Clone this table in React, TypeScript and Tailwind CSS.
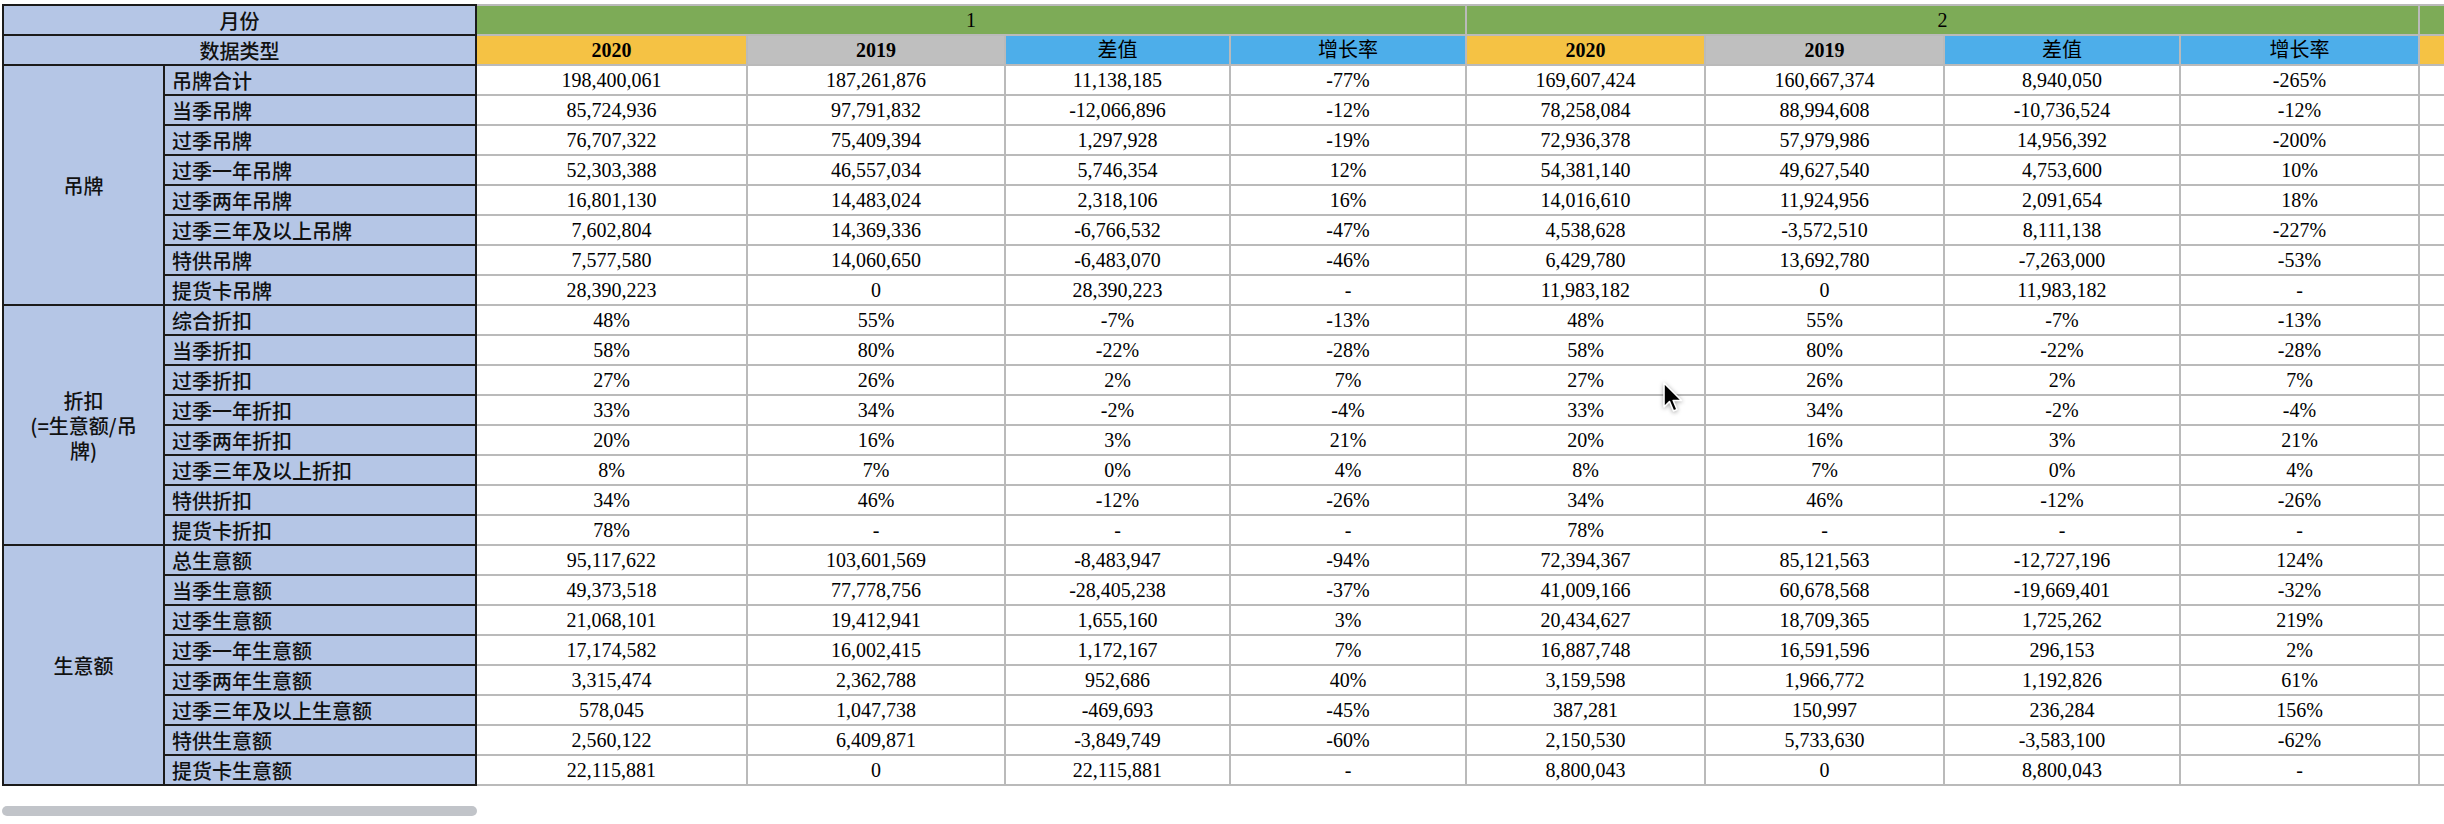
import React from "react"

type Row = { name: string; g1: string[]; g2: string[] }
type Group = { label: React.ReactNode; rows: Row[] }

const groups: Group[] = [
  {
    label: "吊牌",
    rows: [
      { name: "吊牌合计", g1: ["198,400,061", "187,261,876", "11,138,185", "-77%"], g2: ["169,607,424", "160,667,374", "8,940,050", "-265%"] },
      { name: "当季吊牌", g1: ["85,724,936", "97,791,832", "-12,066,896", "-12%"], g2: ["78,258,084", "88,994,608", "-10,736,524", "-12%"] },
      { name: "过季吊牌", g1: ["76,707,322", "75,409,394", "1,297,928", "-19%"], g2: ["72,936,378", "57,979,986", "14,956,392", "-200%"] },
      { name: "过季一年吊牌", g1: ["52,303,388", "46,557,034", "5,746,354", "12%"], g2: ["54,381,140", "49,627,540", "4,753,600", "10%"] },
      { name: "过季两年吊牌", g1: ["16,801,130", "14,483,024", "2,318,106", "16%"], g2: ["14,016,610", "11,924,956", "2,091,654", "18%"] },
      { name: "过季三年及以上吊牌", g1: ["7,602,804", "14,369,336", "-6,766,532", "-47%"], g2: ["4,538,628", "-3,572,510", "8,111,138", "-227%"] },
      { name: "特供吊牌", g1: ["7,577,580", "14,060,650", "-6,483,070", "-46%"], g2: ["6,429,780", "13,692,780", "-7,263,000", "-53%"] },
      { name: "提货卡吊牌", g1: ["28,390,223", "0", "28,390,223", "-"], g2: ["11,983,182", "0", "11,983,182", "-"] },
    ],
  },
  {
    label: (
      <>
        折扣
        <br />
        (=生意额/吊
        <br />
        牌)
      </>
    ),
    rows: [
      { name: "综合折扣", g1: ["48%", "55%", "-7%", "-13%"], g2: ["48%", "55%", "-7%", "-13%"] },
      { name: "当季折扣", g1: ["58%", "80%", "-22%", "-28%"], g2: ["58%", "80%", "-22%", "-28%"] },
      { name: "过季折扣", g1: ["27%", "26%", "2%", "7%"], g2: ["27%", "26%", "2%", "7%"] },
      { name: "过季一年折扣", g1: ["33%", "34%", "-2%", "-4%"], g2: ["33%", "34%", "-2%", "-4%"] },
      { name: "过季两年折扣", g1: ["20%", "16%", "3%", "21%"], g2: ["20%", "16%", "3%", "21%"] },
      { name: "过季三年及以上折扣", g1: ["8%", "7%", "0%", "4%"], g2: ["8%", "7%", "0%", "4%"] },
      { name: "特供折扣", g1: ["34%", "46%", "-12%", "-26%"], g2: ["34%", "46%", "-12%", "-26%"] },
      { name: "提货卡折扣", g1: ["78%", "-", "-", "-"], g2: ["78%", "-", "-", "-"] },
    ],
  },
  {
    label: "生意额",
    rows: [
      { name: "总生意额", g1: ["95,117,622", "103,601,569", "-8,483,947", "-94%"], g2: ["72,394,367", "85,121,563", "-12,727,196", "124%"] },
      { name: "当季生意额", g1: ["49,373,518", "77,778,756", "-28,405,238", "-37%"], g2: ["41,009,166", "60,678,568", "-19,669,401", "-32%"] },
      { name: "过季生意额", g1: ["21,068,101", "19,412,941", "1,655,160", "3%"], g2: ["20,434,627", "18,709,365", "1,725,262", "219%"] },
      { name: "过季一年生意额", g1: ["17,174,582", "16,002,415", "1,172,167", "7%"], g2: ["16,887,748", "16,591,596", "296,153", "2%"] },
      { name: "过季两年生意额", g1: ["3,315,474", "2,362,788", "952,686", "40%"], g2: ["3,159,598", "1,966,772", "1,192,826", "61%"] },
      { name: "过季三年及以上生意额", g1: ["578,045", "1,047,738", "-469,693", "-45%"], g2: ["387,281", "150,997", "236,284", "156%"] },
      { name: "特供生意额", g1: ["2,560,122", "6,409,871", "-3,849,749", "-60%"], g2: ["2,150,530", "5,733,630", "-3,583,100", "-62%"] },
      { name: "提货卡生意额", g1: ["22,115,881", "0", "22,115,881", "-"], g2: ["8,800,043", "0", "8,800,043", "-"] },
    ],
  },
]

const subHeaders = [
  { text: "2020", cls: "bg-[#f5c244] font-bold" },
  { text: "2019", cls: "bg-[#bfbfbf] font-bold" },
  { text: "差值", cls: "bg-[#4daeea]" },
  { text: "增长率", cls: "bg-[#4daeea]" },
]

const label =
  "bg-[#b5c6e6] border-r-2 border-b-2 border-[#1b1b1b] font-['Noto_Sans_CJK_SC',sans-serif] font-medium text-[20px] leading-[25px] text-[#111]"
const cell = "flex items-center justify-center border-r-2 border-b-2 border-[#bababa]"

function Cursor() {
  return (
    <svg
      className="absolute left-[1662px] top-[381px] drop-shadow-[0_1px_2px_rgba(0,0,0,0.35)]"
      width="22"
      height="33"
      viewBox="0 0 22 33"
    >
      <path
        d="M2 2 L2 26 L7.5 20.5 L11.5 30 L15 28.5 L11.2 19.5 L19.5 19.5 Z"
        fill="#000"
        stroke="#fff"
        strokeWidth="1.6"
        strokeLinejoin="round"
      />
    </svg>
  )
}

export default function App() {
  return (
    <div className="relative w-[2444px] h-[824px] overflow-hidden bg-white pt-[4px] pl-[2px] font-['Liberation_Serif','Noto_Sans_CJK_SC',serif] text-[20px] text-black">
      <div className="grid w-max grid-cols-[163px_312px_271px_258px_225px_236px_239px_239px_236px_239px_239px_239px_239px_239px] grid-rows-[32px] auto-rows-[30px]">
        {/* header: month */}
        <div className={`${label} col-span-2 border-t-2 border-l-2 flex items-center justify-center`}>月份</div>
        {["1", "2", ""].map((m, i) => (
          <div key={i} className={`${cell} col-span-4 border-t-2 bg-[#7dab57]`}>
            {m}
          </div>
        ))}

        {/* header: data type */}
        <div className={`${label} col-span-2 border-l-2 flex items-center justify-center`}>数据类型</div>
        {[0, 1, 2].map((g) =>
          subHeaders.map((h) => (
            <div key={`${g}-${h.text}`} className={`${cell} ${h.cls}`}>
              {g < 2 ? h.text : ""}
            </div>
          ))
        )}

        {groups.map((grp, gi) =>
          grp.rows.map((r, ri) => (
            <React.Fragment key={`${gi}-${ri}`}>
              {ri === 0 && (
                <div className={`${label} row-span-8 border-l-2 flex items-center justify-center text-center px-2`}>
                  <span>{grp.label}</span>
                </div>
              )}
              <div className={`${label} flex items-center pl-[7px]`}>{r.name}</div>
              {[...r.g1, ...r.g2, "", "", "", ""].map((v, i) => (
                <div key={i} className={`${cell} bg-white`}>
                  {v}
                </div>
              ))}
            </React.Fragment>
          ))
        )}
      </div>

      <div className="mt-[20px] h-[10px] w-[475px] rounded-full bg-[#c1c4c9]" />

      <Cursor />
    </div>
  )
}
